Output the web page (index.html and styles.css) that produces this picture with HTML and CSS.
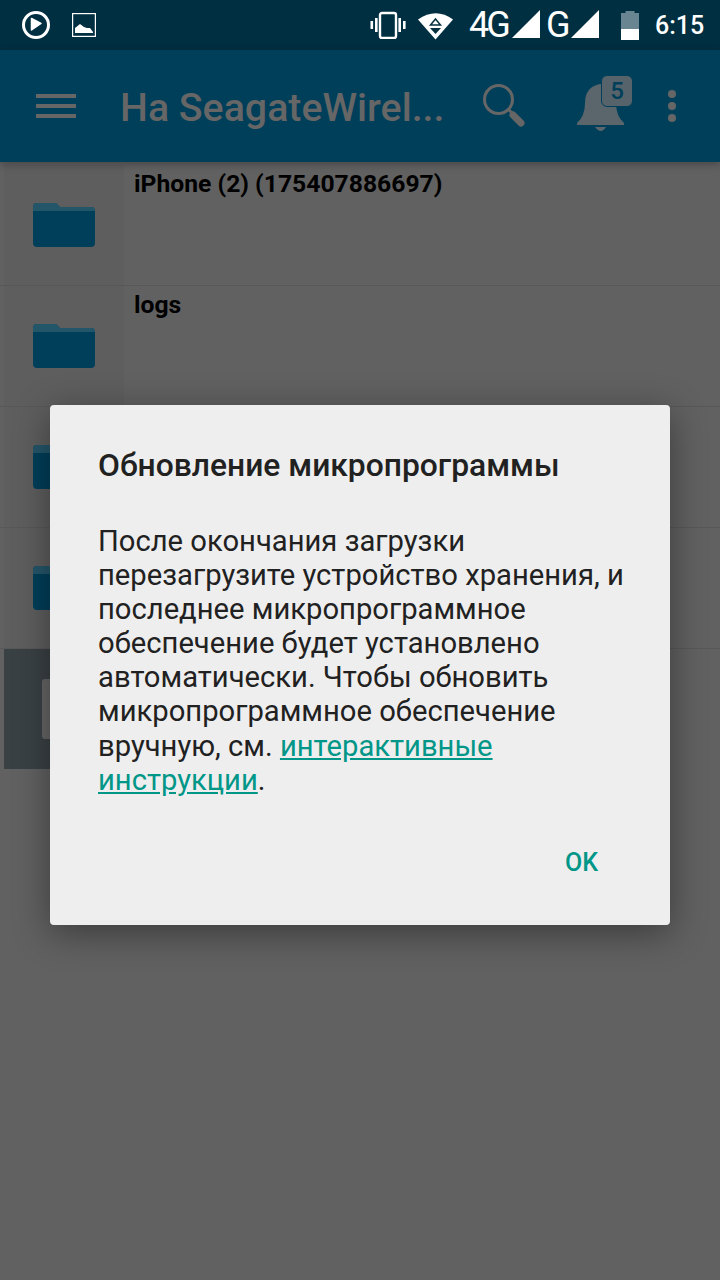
FILE: index.html
```html
<!DOCTYPE html>
<html>
<head>
    <title>Firmware update</title>
    <link rel="stylesheet" href="styles.css">
</head>
<body>
    <div class="screen">
        <div class="status-bar">
            <div class="status-left">
                <svg class="st-play" width="30" height="30" viewBox="0 0 30 30">
                    <circle cx="15" cy="15" r="12.5" fill="none" stroke="#fff" stroke-width="3"/>
                    <path d="M10.5 8.5 L20 13.5 L10.5 20 Z" fill="#fff" stroke="#fff" stroke-width="1.5" stroke-linejoin="round"/>
                </svg>
                <svg class="st-pic" width="24" height="24" viewBox="0 0 24 24">
                    <rect x="0.5" y="0.5" width="23" height="23" fill="none" stroke="#fff" stroke-width="1.4"/>
                    <path d="M3 20 V15 L8 11 L12 14 L15 15 H18 L21 19 V20 Z" fill="#fff"/>
                </svg>
            </div>
            <div class="status-right">
                <svg class="st-vib" width="36" height="28" viewBox="0 0 36 28">
                    <rect x="10" y="2" width="16" height="25" rx="2" fill="none" stroke="#fff" stroke-width="2.4"/>
                    <rect x="5" y="7" width="2.6" height="14" fill="#fff"/>
                    <rect x="28.4" y="7" width="2.6" height="14" fill="#fff"/>
                    <rect x="0.5" y="10" width="2.6" height="8" fill="#fff"/>
                    <rect x="33" y="10" width="2.6" height="8" fill="#fff"/>
                </svg>
                <svg class="st-wifi" width="36" height="29" viewBox="0 0 36 29">
                    <path d="M0 8.5 Q18 -4 35 8.5 L17.5 28.5 Z" fill="#fff"/>
                    <path d="M17.5 8 L22.5 14 H12.5 Z" fill="none" stroke="#06303f" stroke-width="1.5"/>
                    <path d="M12 17 H23 L17.5 23 Z" fill="#06303f"/>
                </svg>
                <span class="st-net st-4g">4G</span>
                <svg class="st-signal" width="28" height="28" viewBox="0 0 28 28"><path d="M0 28 L28 0 V28 Z" fill="#fff"/></svg>
                <span class="st-net st-g">G</span>
                <svg class="st-signal" width="28" height="28" viewBox="0 0 28 28"><path d="M0 28 L28 0 V28 Z" fill="#fff"/></svg>
                <svg class="st-batt" width="20" height="29" viewBox="0 0 20 29">
                    <path d="M5.5 0 H14.5 V2 H19 V18 H1 V2 H5.5 Z" fill="#6a8592"/>
                    <rect x="1" y="18" width="18" height="11" fill="#fff"/>
                </svg>
                <span class="st-time">6:15</span>
            </div>
        </div>

        <div class="app-bar">
            <div class="menu-btn"><span></span><span></span><span></span></div>
            <div class="app-title">На SeagateWirel...</div>
            <svg class="ic-search" width="46" height="46" viewBox="0 0 46 46">
                <circle cx="15.5" cy="15.5" r="14" fill="none" stroke="#666" stroke-width="3"/>
                <path d="M25 25 L31 31" stroke="#666" stroke-width="3"/>
                <path d="M30 31 L38 39" stroke="#666" stroke-width="7" stroke-linecap="round"/>
            </svg>
            <div class="bell-wrap">
                <svg width="48" height="58" viewBox="0 0 48 58">
                    <path d="M0 49 V47 Q8 40 8 27 Q8 11 23 8 Q39 11 39 27 Q39 40 47 47 V49 Z" fill="#5b666c"/>
                    <path d="M18 51 H29 Q24 59 18 51 Z" fill="#5b666c"/>
                </svg>
                <div class="bell-badge">5</div>
            </div>
            <div class="dots"><span></span><span></span><span></span></div>
        </div>

        <div class="file-list">
            <div class="file-row">
                <div class="thumb">
                    <svg class="folder" width="62" height="44" viewBox="0 0 62 44"><use href="#folder-shape"/></svg>
                </div>
                <div class="file-name">iPhone (2) (175407886697)</div>
            </div>
            <div class="file-row">
                <div class="thumb">
                    <svg class="folder" width="62" height="44" viewBox="0 0 62 44"><use href="#folder-shape"/></svg>
                </div>
                <div class="file-name">logs</div>
            </div>
            <div class="file-row">
                <div class="thumb">
                    <svg class="folder" width="62" height="44" viewBox="0 0 62 44"><use href="#folder-shape"/></svg>
                </div>
            </div>
            <div class="file-row">
                <div class="thumb">
                    <svg class="folder" width="62" height="44" viewBox="0 0 62 44"><use href="#folder-shape"/></svg>
                </div>
            </div>
            <div class="file-row selected">
                <div class="thumb"><div class="doc"></div></div>
            </div>
        </div>

        <div class="scrim">
            <div class="dialog">
                <h2 class="dialog-title">Обновление микропрограммы</h2>
                <p class="dialog-text">После окончания загрузки перезагрузите устройство хранения, и последнее микропрограммное обеспечение будет установлено автоматически. Чтобы обновить микропрограммное обеспечение вручную, см. <a href="#" class="dialog-link">интерактивные инструкции</a>.</p>
                <div class="dialog-actions"><span class="ok-btn">OK</span></div>
            </div>
        </div>

        <svg class="defs" width="0" height="0">
            <defs>
                <g id="folder-shape">
                    <path d="M0 40 V4 Q0 0 4 0 H23 L27 4 H58 Q62 4 62 8 V40 Q62 44 58 44 H4 Q0 44 0 40 Z" fill="#003f5a"/>
                    <path d="M0 8 V4 Q0 0 4 0 H23 L27 4 H58 Q62 4 62 8 Z" fill="#24566a"/>
                </g>
            </defs>
        </svg>
    </div>
</body>
</html>
```

FILE: styles.css
```css
* { box-sizing: border-box; }
html, body { margin: 0; padding: 0; }
body { font-family: Roboto, "Noto Sans", sans-serif; background: #616161; }

.screen { position: relative; width: 720px; height: 1280px; overflow: hidden; background: #616161; }

/* status bar */
.status-bar { height: 50px; background: #002f41; display: flex; justify-content: space-between; align-items: center; }
.status-left { display: flex; align-items: center; padding-left: 21px; }
.st-pic { margin-left: 21px; }
.status-right { display: flex; align-items: center; padding-right: 16px; }
.st-vib { margin-right: 12px; }
.st-wifi { margin-right: 15px; }
.st-net { color: #fff; font-weight: 400; font-size: 36px; line-height: 30px; letter-spacing: -3px; }
.st-4g { width: 43px; }
.st-signal { margin-right: 5px; margin-top: -2px; }
.st-g { width: 25px; margin-left: 1px; }
.st-batt { margin-left: 16px; margin-right: 15px; }
.st-time { color: #fff; font-size: 25px; font-weight: 500; width: 49px; }

/* app bar */
.app-bar { height: 112px; background: #003f5a; display: flex; align-items: center; position: relative; z-index: 1; box-shadow: 0 2px 8px rgba(0,0,0,0.3); }
.menu-btn { width: 40px; margin-left: 36px; display: flex; flex-direction: column; gap: 6px; }
.menu-btn span { display: block; height: 4px; background: #666; }
.app-title { margin-left: 44px; margin-top: 3px; width: 363px; color: #666; font-size: 39.3px; font-weight: 500; white-space: nowrap; }
.ic-search { margin-top: 2px; }
.bell-wrap { position: relative; width: 48px; height: 58px; margin-left: 48px; margin-top: -2px; }
.bell-wrap svg { display: block; }
.bell-badge { position: absolute; left: 24px; top: -1px; width: 32px; height: 32px; border-radius: 6px; background: #56636b; border: 1px solid #003f5a; color: #003f5a; font-size: 24px; font-weight: 500; text-align: center; line-height: 30px; }
.dots { margin-left: 43px; display: flex; flex-direction: column; gap: 4px; }
.dots span { display: block; width: 8px; height: 8px; border-radius: 50%; background: #666; }

/* file list */
.file-list { padding-top: 3px; }
.file-row { height: 121px; display: flex; border-bottom: 1px solid #585858; padding-left: 4px; }
.thumb { width: 120px; background: #5e5e5e; display: flex; align-items: center; justify-content: center; flex-shrink: 0; }
.folder { display: block; }
.file-name { padding: 5px 0 0 10px; color: #000; font-size: 24.7px; font-weight: 700; line-height: 28px; }
.file-row.selected { border-bottom: 0; height: 120px; }
.file-row.selected .thumb { background: #3a4144; width: 120px; justify-content: flex-start; padding-left: 38px; }
.doc { width: 40px; height: 60px; background: #666; border-radius: 3px; }

/* dialog */
.scrim { position: absolute; left: 0; top: 0; width: 100%; height: 100%; padding: 405px 50px 0; z-index: 2; }
.dialog { height: 520px; background: #eee; border-radius: 4px; box-shadow: 0 8px 36px rgba(0,0,0,0.4); padding: 40px 40px 0 48px; }
.dialog-title { margin: 0; font-size: 31.8px; font-weight: 500; line-height: 40px; color: #212121; }
.dialog-text { margin: 39px 0 0; font-size: 29.2px; line-height: 34.1px; color: #212121; }
.dialog-link { color: #009688; }
.dialog-actions { display: flex; justify-content: flex-end; margin-top: 49px; }
.ok-btn { color: #009688; font-size: 25px; font-weight: 500; line-height: 34px; margin-right: 32px; }

.defs { position: absolute; }
```
